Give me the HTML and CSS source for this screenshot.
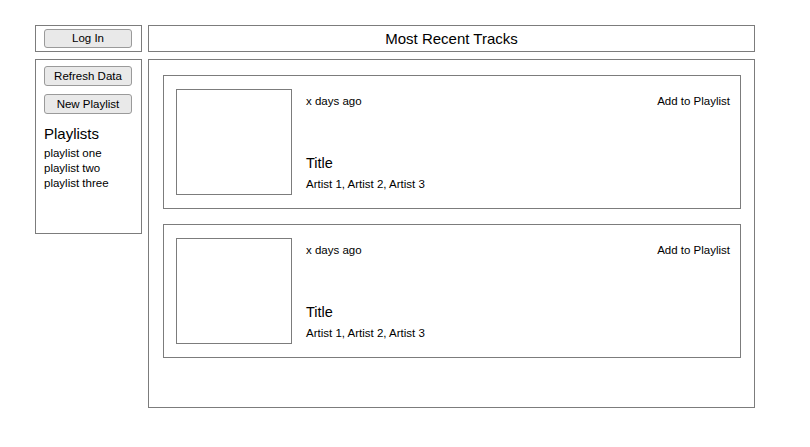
FILE: index.html
```html
<!DOCTYPE html>
<html>
<head>
<meta charset="utf-8">
<link rel="stylesheet" href="styles.css">
</head>
<body>
<div class="app">
  <div class="box login-box"><button class="btn">Log In</button></div>
  <div class="box header">Most Recent Tracks</div>
  <div class="box sidebar">
    <button class="btn">Refresh Data</button>
    <button class="btn">New Playlist</button>
    <h2 class="pl-heading">Playlists</h2>
    <ul class="pl-list">
      <li>playlist one</li>
      <li>playlist two</li>
      <li>playlist three</li>
    </ul>
  </div>
  <div class="box main">
    <div class="card">
      <div class="art"></div>
      <div class="info">
        <div class="top-row"><span>x days ago</span><span>Add to Playlist</span></div>
        <div class="meta">
          <div class="title">Title</div>
          <div class="artists">Artist 1, Artist 2, Artist 3</div>
        </div>
      </div>
    </div>
    <div class="card">
      <div class="art"></div>
      <div class="info">
        <div class="top-row"><span>x days ago</span><span>Add to Playlist</span></div>
        <div class="meta">
          <div class="title">Title</div>
          <div class="artists">Artist 1, Artist 2, Artist 3</div>
        </div>
      </div>
    </div>
  </div>
</div>
</body>
</html>
```
FILE: styles.css
```css
* { box-sizing: border-box; }
html, body { margin: 0; padding: 0; background: #fff; }
body {
  font-family: "Liberation Sans", Arial, sans-serif;
  color: #000;
  font-size: 11.5px;
}
.app {
  display: grid;
  grid-template-columns: 107px 607px;
  grid-template-rows: 27px 349px;
  column-gap: 6px;
  row-gap: 7px;
  padding: 25px 0 0 35px;
  align-items: start;
}
.box {
  border: 1px solid #7c7c7c;
}
.login-box {
  height: 27px;
  padding: 3px 8px 0 8px;
}
.btn {
  display: block;
  width: 88px;
  height: 19px;
  margin: 0;
  padding: 0;
  font-family: inherit;
  font-size: 11.5px;
  color: #000;
  background: #e9e9e9;
  border: 1px solid #9a9a9a;
  border-radius: 3px;
  line-height: 17px;
}
.header {
  height: 27px;
  display: flex;
  align-items: center;
  justify-content: center;
  font-size: 15px;
}
.sidebar {
  height: 175px;
  padding: 6px 8px 0 8px;
  display: flex;
  flex-direction: column;
}
.sidebar .btn { height: 20px; line-height: 18px; }
.sidebar .btn + .btn { margin-top: 8px; }
.pl-heading {
  font-size: 15px;
  font-weight: normal;
  margin: 10px 0 2px 0;
  line-height: 20px;
}
.pl-list {
  list-style: none;
  margin: 0;
  padding: 0;
  line-height: 15px;
}
.main {
  height: 349px;
  padding: 15px 13px 0 14px;
  display: flex;
  flex-direction: column;
  gap: 15px;
}
.card {
  border: 1px solid #7c7c7c;
  height: 134px;
  padding: 13px 10px 13px 12px;
  display: flex;
  gap: 14px;
}
.art {
  width: 116px;
  height: 106px;
  border: 1px solid #7c7c7c;
  flex: none;
}
.info {
  flex: 1;
  display: flex;
  flex-direction: column;
  justify-content: space-between;
  padding: 5px 0 3px 0;
}
.top-row {
  display: flex;
  justify-content: space-between;
  line-height: 15px;
}
.title {
  font-size: 14.5px;
  line-height: 18px;
  margin-bottom: 5px;
}
.artists {
  line-height: 15px;
}
```
